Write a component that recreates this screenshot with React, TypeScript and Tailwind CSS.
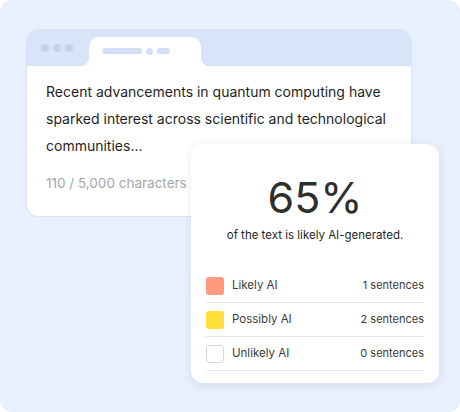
export default function App() {
  const rows = [
    { label: 'Likely AI', count: '1 sentences', swatch: 'bg-[#ff9a7e]' },
    { label: 'Possibly AI', count: '2 sentences', swatch: 'bg-[#ffdf38]' },
    { label: 'Unlikely AI', count: '0 sentences', swatch: 'bg-white border border-[#cdd7e6]' },
  ];

  return (
    <div className="bg-white w-[460px] h-[412px]" style={{ fontFamily: 'Inter, "Noto Sans", sans-serif' }}>
      <div className="relative w-[460px] h-[412px] rounded-[12px] bg-[#e8effd] pt-[29px] pl-[26px]">
        {/* Editor window */}
        <div className="w-[386px] rounded-[12px] bg-white border border-[#d9e3f4] overflow-hidden">
          <div className="h-[36px] bg-[#d8e5f8] flex items-end pl-[14px]">
            <div className="flex gap-[4px] self-center mb-[1px]">
              <span className="w-[8px] h-[8px] rounded-full bg-[#c3d3ef]" />
              <span className="w-[8px] h-[8px] rounded-full bg-[#c3d3ef]" />
              <span className="w-[8px] h-[8px] rounded-full bg-[#c3d3ef]" />
            </div>
            <div className="relative ml-[16px] w-[112px] h-[29px] bg-white rounded-t-[10px] flex items-center gap-[4px] pl-[13px] pb-[1px]">
              {/* concave flares at the tab's foot */}
              <span className="absolute -left-[8px] bottom-0 w-[8px] h-[8px] bg-white">
                <span className="block w-full h-full bg-[#d8e5f8] rounded-br-[8px]" />
              </span>
              <span className="absolute -right-[8px] bottom-0 w-[8px] h-[8px] bg-white">
                <span className="block w-full h-full bg-[#d8e5f8] rounded-bl-[8px]" />
              </span>
              <span className="w-[40px] h-[6px] rounded-full bg-[#d3e0f6]" />
              <span className="w-[7px] h-[7px] rounded-full bg-[#d3e0f6]" />
              <span className="w-[13px] h-[6px] rounded-full bg-[#d3e0f6]" />
            </div>
          </div>
          <div className="pt-[12px] pb-[23px] pl-[19px] pr-[20px]">
            <p className="text-[14px] leading-[27px] text-[#1f1f1f]">
              Recent advancements in quantum computing have sparked interest across scientific and technological
              communities...
            </p>
            <p className="mt-[14px] text-[13.5px] leading-[20px] text-[#a3a7ae]">110 / 5,000 characters</p>
          </div>
        </div>

        {/* Result card */}
        <div className="absolute left-[191px] top-[144px] w-[248px] h-[239px] rounded-[12px] bg-white shadow-[0_2px_10px_rgba(60,80,120,0.12)] px-[15px] pt-[25px]">
          <div className="text-center text-[43px] leading-[56px] text-[#2e2e2e]">65%</div>
          <div className="mt-[2px] text-center text-[11.5px] leading-[16px] text-[#1f1f1f]">of the text is likely AI-generated.</div>
          <div className="mt-[26px]">
            {rows.map((r) => (
              <div key={r.label} className="h-[34px] flex items-center border-b border-[#e6e8ec]">
                <span className={`w-[18px] h-[18px] rounded-[3px] ${r.swatch}`} />
                <span className="ml-[8px] text-[11.5px] text-[#3a3a3a]">{r.label}</span>
                <span className="ml-auto text-[11px] text-[#3a3a3a]">{r.count}</span>
              </div>
            ))}
          </div>
        </div>
      </div>
    </div>
  );
}
